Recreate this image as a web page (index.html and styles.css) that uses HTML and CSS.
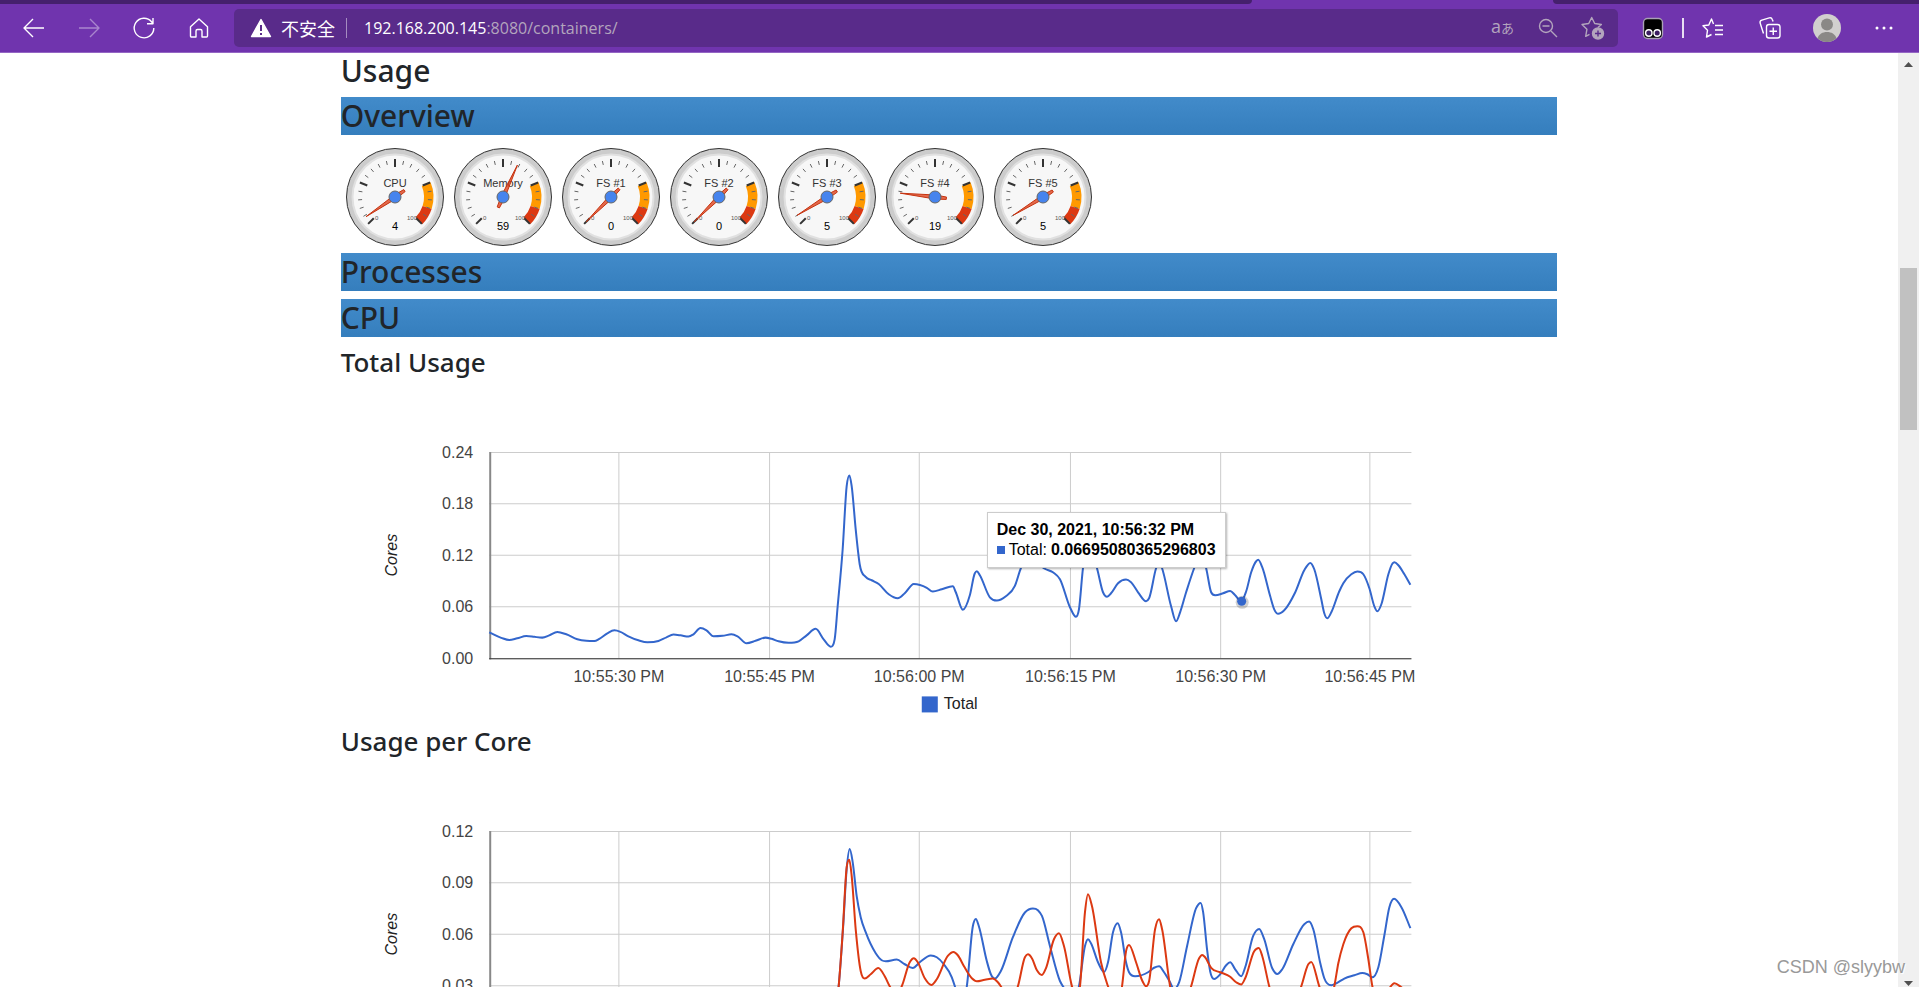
FILE: index.html
```html
<!DOCTYPE html>
<html lang="en">
<head>
<meta charset="utf-8">
<title>cAdvisor - /</title>
<link rel="stylesheet" href="styles.css">
</head>
<body>
<header class="browser">
  <div class="tabstrip"><span class="tabs-left"></span><span class="tab-active"></span><span class="tabs-right"></span></div>
  <div class="toolbar">
    <nav class="nav-buttons">
      <button class="nav-btn" type="button" aria-label="Back"><svg class="icon" viewBox="0 0 24 24"><path d="M22 12H2.500M11 3L2 12l9 9"/></svg></button>
      <button class="nav-btn dim" type="button" aria-label="Forward"><svg class="icon" viewBox="0 0 24 24"><path d="M2 12h19.500M13 3l9 9-9 9"/></svg></button>
      <button class="nav-btn" type="button" aria-label="Refresh"><svg class="icon" viewBox="0 0 24 24"><path d="M21.800 12A9.800 9.800 0 1 1 19.500 5.700L21 7.500M21 2v5.800h-6"/></svg></button>
      <button class="nav-btn" type="button" aria-label="Home"><svg class="icon" viewBox="0 0 24 24"><path d="M3.500 10.800L12 3l8.500 7.800V20a1 1 0 0 1-1 1H15v-6a1.500 1.500 0 0 0-1.500-1.500h-3A1.500 1.500 0 0 0 9 15v6H4.500a1 1 0 0 1-1-1z"/></svg></button>
    </nav>
    <div class="address">
      <svg class="icon warn" viewBox="0 0 24 24"><path class="solid" d="M12 3.500L21.500 20.500h-19z"/><path class="mark" d="M12 9v6M12 17v2"/></svg>
      <span class="security">不安全</span>
      <span class="divider"></span>
      <span class="url">192.168.200.145<span class="url-dim">:8080/containers/</span></span>
      <div class="address-tools">
        <button class="tool-btn translate" type="button" aria-label="Translate"><span>a</span><span class="kana">あ</span></button>
        <button class="tool-btn" type="button" aria-label="Zoom out"><svg class="icon" viewBox="0 0 24 24"><circle cx="10" cy="10" r="6.500"/><path d="M15 15l6 6M6.500 10h7"/></svg></button>
        <button class="tool-btn" type="button" aria-label="Add to favorites"><svg class="icon" viewBox="0 0 24 24"><path d="M8.500 18.300L4.700 20.300l1.200-7L1 8.500l6.700-1L10.700 1.500l3 6 6.700 1-3.500 3"/><circle class="solid" cx="17" cy="17.500" r="5.500"/><path class="plus" d="M17 14.500v6M14 17.500h6"/></svg></button>
      </div>
    </div>
    <div class="extensions">
      <button class="ext-btn" type="button" aria-label="Tampermonkey"><svg class="icon" viewBox="0 0 24 24"><rect x="2.500" y="2.500" width="19" height="20" rx="4" fill="#000" stroke="#a8a0b4"/><circle cx="7.800" cy="17" r="3.200" fill="#3b1c60"/><circle cx="16.200" cy="17" r="3.200" fill="#3b1c60"/></svg></button>
      <span class="ext-divider"></span>
      <div class="ext-group">
        <button class="ext-btn" type="button" aria-label="Favorites"><svg class="icon" viewBox="0 0 24 24"><path d="M12.500 8L10.500 3 7.800 9 2 9.800l4.500 4.500-1 6.700 5-2.500M14 9.500h8M14 14h8M14 18.500h8"/></svg></button>
        <button class="ext-btn" type="button" aria-label="Collections"><svg class="icon" viewBox="0 0 24 24"><rect x="8.500" y="8.500" width="13.500" height="13.500" rx="2.500"/><path d="M15.250 11.500v7.500M11.500 15.250H19M5.500 17.500L2.200 7.200a2.500 2.500 0 0 1 1.600-3.100l7.500-2.200a2.500 2.500 0 0 1 3 1.600l.8 2"/></svg></button>
        <button class="ext-btn" type="button" aria-label="Profile"><svg class="avatar" viewBox="0 0 28 28"><circle cx="14" cy="14" r="14" fill="#d1cfce"/><circle cx="14" cy="10.500" r="6" fill="#8a8886"/><path d="M4.500 24.300C6 20 9.500 18 14 18s8 2 9.500 6.300A14 14 0 0 1 4.500 24.300z" fill="#8a8886"/></svg></button>
        <button class="ext-btn" type="button" aria-label="Settings and more"><svg class="icon dots" viewBox="0 0 24 24"><circle cx="5" cy="12" r="1.500"/><circle cx="12" cy="12" r="1.500"/><circle cx="19" cy="12" r="1.500"/></svg></button>
      </div>
    </div>
  </div>
</header>
<div class="viewport">
  <div class="page">
    <main class="container">
      <h2 class="title">Usage</h2>
      <h2 class="bar">Overview</h2>
      <div class="gauges" id="gauges"></div>
      <h2 class="bar">Processes</h2>
      <h2 class="bar">CPU</h2>
      <h3 class="subtitle">Total Usage</h3>
      <div class="chart" id="chart-total">
        <div class="tooltip">
          <div class="tooltip-title">Dec 30, 2021, 10:56:32 PM</div>
          <div class="tooltip-row"><span class="swatch"></span><span>Total:</span><b>0.06695080365296803</b></div>
        </div>
      </div>
      <h3 class="subtitle">Usage per Core</h3>
      <div class="chart" id="chart-cores"></div>
    </main>
  </div>
  <div class="scrollbar">
    <svg class="arrow" viewBox="0 0 9 5"><path d="M0 5L4.500 0 9 5z"/></svg>
    <div class="track"><div class="thumb"></div></div>
    <svg class="arrow" viewBox="0 0 9 5"><path d="M0 0L4.500 5 9 0z"/></svg>
  </div>
</div>
<div class="watermark">CSDN @slyybw</div>
<script src="charts.js"></script>
</body>
</html>
```
FILE: styles.css
```css
* {
  box-sizing: border-box;
}

body {
  margin: 0;
  height: 100vh;
  display: flex;
  flex-direction: column;
  overflow: hidden;
  background: #fff;
  color: #212529;
  font-family: "Open Sans", "Noto Sans", "Noto Sans CJK SC", sans-serif;
}

button {
  border: 0;
  padding: 0;
  background: none;
  color: inherit;
  font: inherit;
  display: flex;
  align-items: center;
  justify-content: center;
}

/* Browser frame */
.browser {
  background: #7034ae;
  border-bottom: 1px solid #9466c4;
  flex: none;
}

.tabstrip {
  display: flex;
  height: 4px;
}

.tabs-left {
  width: 1252px;
  background: #45206d;
  border-bottom-right-radius: 4px;
}

.tab-active {
  width: 301px;
}

.tabs-right {
  flex: 1;
  background: #45206d;
  border-bottom-left-radius: 4px;
}

.toolbar {
  display: flex;
  align-items: center;
  height: 48px;
  padding-left: 6px;
  color: #fff;
}

.nav-buttons {
  display: flex;
  padding-right: 8px;
}

.nav-btn {
  width: 55px;
  height: 38px;
}

.dim {
  opacity: 0.4;
}

.icon {
  width: 24px;
  height: 24px;
  fill: none;
  stroke: currentColor;
  stroke-width: 1.4;
  stroke-linejoin: round;
}

.address {
  flex: 1;
  display: flex;
  align-items: center;
  height: 38px;
  padding: 0 3px 0 15px;
  border-radius: 5px;
  background: #592b8a;
}

.solid {
  fill: currentColor;
}

.mark {
  stroke: #592b8a;
  stroke-width: 2;
}

.plus {
  stroke: #592b8a;
}

.security {
  margin-left: 8px;
  font-family: "Noto Sans CJK SC", sans-serif;
  font-size: 18px;
  line-height: 24px;
}

.divider {
  width: 1px;
  height: 20px;
  margin: 0 17px 0 11px;
  background: #a58cc0;
}

.url {
  font-size: 16px;
  line-height: 24px;
}

.url-dim {
  color: #b3a5bd;
}

.address-tools {
  display: flex;
  margin-left: auto;
  color: #b3a5bd;
}

.tool-btn {
  width: 45px;
  height: 38px;
}

.translate {
  font-size: 18px;
  line-height: 24px;
  align-items: baseline;
  padding-top: 5px;
}

.kana {
  font-family: "Noto Sans CJK JP", sans-serif;
  font-size: 13px;
}

.extensions {
  display: flex;
  align-items: center;
  padding: 0 12px;
}

.ext-btn {
  width: 46px;
  height: 38px;
}

.ext-divider {
  width: 2px;
  height: 20px;
  margin: 0 6px;
  background: #e8def2;
}

.ext-group {
  display: flex;
  gap: 11px;
}

.avatar {
  width: 28px;
  height: 28px;
}

.dots {
  fill: currentColor;
  stroke: none;
}

/* Page */
.viewport {
  flex: 1;
  min-height: 0;
  display: flex;
}

.page {
  flex: 1;
  overflow: hidden;
}

.container {
  width: 64.1%;
  margin: 0 auto;
}

h2,
h3 {
  margin: 0 0 8px;
  font-family: "Noto Sans", "Open Sans", sans-serif;
  font-weight: 500;
}

h2 {
  font-size: 30px;
  line-height: 38px;
}

.title {
  margin-bottom: 9px;
  line-height: 35px;
}

.bar {
  background: linear-gradient(#428bca, #357ebd);
}

.subtitle {
  font-size: 26px;
  line-height: 34px;
}

.gauges {
  display: flex;
  height: 110px;
}

.gauge {
  width: 108px;
  height: 108px;
  font-family: "Liberation Sans", Arial, sans-serif;
  font-size: 11px;
}

.gauge-face {
  fill: #ccc;
  stroke: #333;
}

.gauge-dial {
  fill: #f7f7f7;
  stroke: #e0e0e0;
  stroke-width: 2;
}

.tick-major {
  stroke: #333;
  stroke-width: 2;
}

.tick-minor {
  stroke: #666;
  stroke-width: 1;
}

.gauge-end {
  font-size: 6px;
  fill: #555;
}

.needle {
  fill: #dc3912;
  fill-opacity: 0.75;
  stroke: #c63310;
}

.hub {
  fill: #4684ee;
  stroke: #666;
}

.chart {
  position: relative;
  font-family: "Liberation Sans", Arial, sans-serif;
  font-size: 16px;
}

.chart svg {
  display: block;
  width: 100%;
}

.grid {
  stroke: #ccc;
}

.axis-y {
  stroke: #888;
  stroke-width: 2;
}

.axis-x {
  stroke: #333;
}

.tick-label {
  fill: #444;
}

.legend-label {
  fill: #222;
}

.axis-title {
  fill: #222;
  font-style: italic;
}

.line {
  fill: none;
  stroke-width: 2;
}

.halo {
  fill: #000;
  fill-opacity: 0.18;
}

.tooltip {
  position: absolute;
  left: 646px;
  top: 125px;
  padding: 7px 9px;
  border: 1px solid #ccc;
  background: #fff;
  box-shadow: 1px 1px 2px rgba(0, 0, 0, 0.3);
  color: #000;
  line-height: 20px;
  white-space: nowrap;
}

.tooltip-title {
  font-weight: bold;
}

.tooltip-row {
  display: flex;
  align-items: center;
  gap: 4px;
}

.swatch {
  width: 8px;
  height: 8px;
  background: #3366cc;
}

.scrollbar {
  width: 21px;
  display: flex;
  flex-direction: column;
  align-items: center;
  padding: 9px 0 1px;
  background: #f0f0f0;
}

.arrow {
  width: 9px;
  height: 5px;
  flex: none;
  fill: #505050;
}

.track {
  flex: 1;
  width: 17px;
  padding-top: 201px;
}

.thumb {
  height: 162px;
  background: #c1c1c1;
}

.watermark {
  position: absolute;
  right: 14px;
  bottom: 10px;
  color: #999;
  font: 18px/20px "Liberation Sans", Arial, sans-serif;
  text-shadow: 1px 1px 1px #fff;
}
```
FILE: charts.js
```js
// Gauges: a 270 degree dial, 0 to 100
function polar(r, deg) {
  const a = deg * Math.PI / 180;
  return (54 + r * Math.sin(a)).toFixed(2) + ' ' + (54 - r * Math.cos(a)).toFixed(2);
}

function band(from, to, color) {
  const a = from * 2.7 - 135, b = to * 2.7 - 135;
  return `<path fill="${color}" d="M${polar(38.5, a)}A38.5 38.5 0 0 1 ${polar(38.5, b)}L${polar(29, b)}A29 29 0 0 0 ${polar(29, a)}z"/>`;
}

function gauge(name, value) {
  let ticks = '';
  for (let i = 0; i <= 20; i++) {
    const a = i * 13.5 - 135, major = i % 5 === 0;
    ticks += `<path class="tick-${major ? 'major' : 'minor'}" d="M${polar(major ? 38 : 37, a)}L${polar(major ? 30 : 33, a)}"/>`;
  }
  const v = value * 2.7 - 135;
  return `<svg class="gauge" viewBox="0 0 108 108">
    <circle class="gauge-face" cx="54" cy="54" r="48.5"/>
    <circle class="gauge-dial" cx="54" cy="54" r="42.5"/>
    ${band(75, 90, '#ff9900')}${band(90, 100, '#dc3912')}${ticks}
    <text x="54" y="44" text-anchor="middle" fill="#333">${name}</text>
    <text class="gauge-end" x="34" y="77">0</text>
    <text class="gauge-end" x="76" y="77" text-anchor="end">100</text>
    <text x="54" y="87" text-anchor="middle">${value}</text>
    <path class="needle" d="M${polar(35, v)}L${polar(2, v + 90)}L${polar(11.5, v + 174)}L${polar(11.5, v + 186)}L${polar(2, v - 90)}z"/>
    <circle class="hub" cx="54" cy="54" r="6"/>
  </svg>`;
}

document.getElementById('gauges').innerHTML = [
  ['CPU', 4], ['Memory', 59], ['FS #1', 0], ['FS #2', 0], ['FS #3', 5], ['FS #4', 19], ['FS #5', 5]
].map(g => gauge(g[0], g[1])).join('');

// Line charts: points are x, y pairs inside the plot area
function smooth(text) {
  const p = text.trim().split(/\s+/).map(s => s.split(',').map(Number));
  const n = p.length, d = [], h = [], m = [];
  for (let i = 0; i < n - 1; i++) {
    h.push(p[i + 1][0] - p[i][0]);
    d.push((p[i + 1][1] - p[i][1]) / h[i]);
  }
  for (let i = 0; i < n; i++) {
    if (i === 0 || i === n - 1) m.push(d[i === 0 ? 0 : n - 2]);
    else if (d[i - 1] * d[i] <= 0) m.push(0);
    else {
      const mean = (d[i - 1] * h[i] + d[i] * h[i - 1]) / (h[i - 1] + h[i]);
      const cap = 3 * Math.min(Math.abs(d[i - 1]), Math.abs(d[i]));
      m.push(Math.sign(mean) * Math.min(Math.abs(mean), cap));
    }
  }
  let path = `M${p[0]}`;
  for (let i = 0; i < n - 1; i++) {
    const t = h[i] / 3;
    path += `C${(p[i][0] + t).toFixed(1)},${(p[i][1] + t * m[i]).toFixed(1)} ${(p[i + 1][0] - t).toFixed(1)},${(p[i + 1][1] - t * m[i + 1]).toFixed(1)} ${p[i + 1]}`;
  }
  return path;
}

function chart(id, labels, series, extra) {
  const xs = [129.5, 280, 429.5, 580.5, 730.5, 879.5];
  const times = ['10:55:30', '10:55:45', '10:56:00', '10:56:15', '10:56:30', '10:56:45'];
  const ys = [0.5, 51.5, 103, 154.5, 206.5];
  let s = '<svg viewBox="0 0 1215 337"><g transform="translate(148 65)">';
  xs.forEach(x => s += `<path class="grid" d="M${x} 0V206"/>`);
  ys.forEach(y => s += `<path class="grid" d="M0 ${y}H921"/>`);
  s += '<path class="axis-y" d="M1 0V207"/><path class="axis-x" d="M0 206.5H921"/>';
  labels.forEach((t, i) => s += `<text class="tick-label" x="-16" y="${ys[i] + 5.5}" text-anchor="end">${t}</text>`);
  times.forEach((t, i) => s += `<text class="tick-label" x="${xs[i]}" y="230" text-anchor="middle">${t} PM</text>`);
  s += '<text class="axis-title" transform="translate(-92 103) rotate(-90)" text-anchor="middle">Cores</text>';
  series.forEach(l => s += `<path class="line" stroke="${l[0]}" d="${smooth(l[1])}"/>`);
  s += extra + '</g></svg>';
  document.getElementById(id).insertAdjacentHTML('afterbegin', s);
}

chart('chart-total', ['0.24', '0.18', '0.12', '0.06', '0.00'], [['#3366cc', `
  0,180 12,185.500 20,187.700 28,186 37,183.700 45,184.500 53,185.300 60,183 68,179.700 77,182 88,187 97,188.500 105,188.700
  110,186.500 118,181 125,178 131,179.500 139,184 149,188 158,190 169,188.700 177,185 184,182.300 191,183 199,184.300 204,182
  211,175.700 217,178 224,184 233,183.500 242,182 248,184 257,191 266,188.500 276,185.300 282,186.500 289,189 299,190.500 309,189
  317,183 326,176.500 334,187 341,194.300 345,187 348,154 353,97 357,34 359.700,23.300 362,34 366,77 370,112 376,124.700
  382,128 389,131.700 399,142 408,146 415,141 424,131.700 437,135.500 443,139.300 452,137 463,134 466,140
  473,157.500 480,143 485,121 487,119 490,123 500,145 507,148.300 516,144 525,133.700 531,116 538,104 546,108 554,116
  563,120 570,127 580,155 586,164.500 589,157 593,116 599,94 607,116 613,140 617,144.500 621,141 628,131 636,127.300 641,130
  648,140 656,149 659,146 666,116 669,109 672,116 681,154 686,169 690,160 696,140 704,116 710,101 716,116 721,140 725,143
  733,141 740,138.700 745,143 751,149 756,139 761,120 766,109 768,107.500 772,115 780,144 784,157 788,161.500 794,158 805,140
  814,118 820,110.700 824,117 831,147 834,161 837,166 841,160 849,139 853,131 861,122 867,119.300 873,122 879,136 884,154
  887,159 891,152 898,122 902,111.500 904,110 908,113 914,122 920,132.500`]],
  `<rect x="432" y="244" width="16" height="16" fill="#3366cc"/><text class="legend-label" x="454" y="257">Total</text>
   <circle class="halo" cx="752" cy="150" r="6.500"/><circle cx="751.500" cy="149" r="4.500" fill="#3366cc"/>`);

chart('chart-cores', ['0.12', '0.09', '0.06', '0.03', '0.00'], [['#3366cc', `
  0,192 100,194 200,192 300,194 344,190 349,155 353.500,95 357,38 360,18 363,31 367,65 371,86 376,101 386,122 392,129 396,130
  407,128.300 415,133 423,136.700 430,131 441,124.300 447,126 454,133 462,146 466,158 471,175 477,155 483,95 486,87.700 489,95
  497,130 501,143 505,147.300 511,139.700 523,106 535,81.300 543,77.300 548,79 552,84.700 560,114.700 570,149.700 575,158
  583,168 589,155 595,114.700 598,108 601,112 608,131 614,140.700 618,131 623,101 627.700,92 631,101 636,131 639,141 645,145
  658,141 664,136.500 669,135 674,141 680,151 684,158 689,151 697,114.700 706,77 710.600,71.700 713,81 717,119 720,140 724,147.700
  730,143 736,134 740,131 745,138 751,145 755,136 763,104.700 769,97.700 774,108 782,137 787,142.700 792,138 803,113
  814,93 818.800,90.300 823,98 830,132 834,147 841,154 846,152 854,147.300 864,144 872,141.700 877,143 882,146 888,136
  894,104 899,76 903.700,67.700 911,76 920,97`],
  ['#dc3912', `
  0,197 100,199 200,197 300,199 344,192 349,155 353,101 357,36 359.600,28.700 362,44.700 366,98 371,139.700 375,147.300
  381,143 388.600,136.700 395,145 400,155 406,164 412,155 420,131 424,127 428,131 435,147 441.600,153.700 447,148 458,124.700
  463.700,120.700 468,124 474,134.700 482,147 487,150 495,148.500 503,147.300 508,151 513,158 521,168 528,155 535,126 538,123
  542,127 547,139 552,143.700 556,137 564,108 569,102 574,114.700 582,155 586,166 590,155 595,81 598,63 602,75 611,131
  618,155 625,172 632,155 636,120 639,113.700 646,131 652,149 656,155 659,150 665,98 669,88 672,98 680,155 690,185 701,155
  709,127 712,123.700 715,126 721,136.700 730,141 740,145.500 746,151 751,153.300 755,147 764,120 768.600,116.700 772,124.700
  779,155 795,185 811,155 818,133 821,130.700 829,155 836,172 844,155 848,132 853,113 861,97 867,95 873,101 878,128 882,155
  892,172 899,157 904,152 911,156 920,163`]], '');
```
